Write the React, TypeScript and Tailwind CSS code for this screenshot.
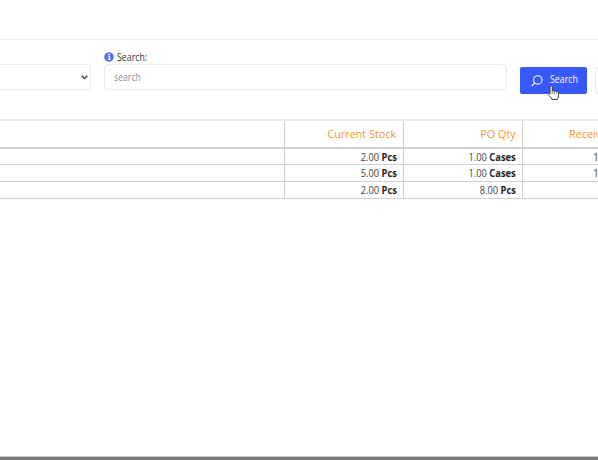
import React from "react";

type Row = { stock: [string, string]; po: [string, string]; received: string };

const rows: Row[] = [
  { stock: ["2.00", "Pcs"], po: ["1.00", "Cases"], received: "1.00" },
  { stock: ["5.00", "Pcs"], po: ["1.00", "Cases"], received: "1.00" },
  { stock: ["2.00", "Pcs"], po: ["8.00", "Pcs"], received: "" },
];

const rowHeights = ["h-[16px]", "h-[17px]", "h-[17px]"];

function Quantity({ value }: { value: [string, string] }) {
  return (
    <div className="border-r border-[#cfcfcf] pr-[6.5px] text-right">
      <span className="inline-block origin-right scale-x-[.93]">
        {value[0]} <b className="font-bold text-[#222]">{value[1]}</b>
      </span>
    </div>
  );
}

function Heading({ children }: { children: string }) {
  return (
    <div className="border-r border-[#cfcfcf] pr-[6.5px] text-right">
      <span className="inline-block origin-right scale-x-[.94]">{children}</span>
    </div>
  );
}

function Pointer() {
  return (
    <svg className="absolute left-[27px] top-[18px] h-[16px] w-[13px]" viewBox="0 0 14 17">
      <path
        d="M3.2 9.8V2c0-1.8 2.4-1.8 2.4 0v4.4c.2-.9 2.1-.8 2.3.4.3-.9 2.1-.7 2.3.4.5-.7 2.2-.4 2.2 1v3.1c0 1.8-.9 2.6-1.3 4.1H5.2C4.5 13.2 2.4 11.8 1 9.9.2 8.7 1.7 7.7 3.2 9.8Z"
        fill="white"
        stroke="#333"
        strokeWidth="1"
        strokeLinejoin="round"
      />
      <path d="M5.6 6.5v3M7.9 7v2.5M10.2 7.5v2" stroke="#444" strokeWidth=".8" fill="none" />
    </svg>
  );
}

export default function App() {
  return (
    <div className="flex h-[460px] w-[598px] flex-col overflow-hidden bg-white font-['Open_Sans','Noto_Sans',sans-serif] text-[10px] text-[#444]">
      <header className="h-10 shrink-0 border-b border-[#eeeeee]" />
      <div className="flex h-[80px] shrink-0 items-start">
        <div className="mt-[24px] flex h-[26px] w-[91px] shrink-0 items-center justify-end rounded-r-[4px] border border-l-0 border-[#e9eaf2] pr-[2px]">
          <svg className="h-[5px] w-[7px]" viewBox="0 0 7 5" fill="none">
            <path d="M.8.8 3.5 3.5 6.2.8" stroke="#383b40" strokeWidth="1.5" />
          </svg>
        </div>
        <div className="ml-[13px] w-[403px] shrink-0 pt-[10px]">
          <div className="flex h-[14px] items-center gap-[3px] text-[#333]">
            <svg className="h-[10px] w-[10px]" viewBox="0 0 10 10">
              <circle cx="5" cy="5" r="4.8" fill="#5872ff" />
              <path d="M4 4.2h1.5v3M3.9 7.4h2.5" stroke="white" strokeWidth="1.1" fill="none" />
              <circle cx="5" cy="2.4" r=".8" fill="white" />
            </svg>
            <span className="origin-left scale-x-[.88]">Search:</span>
          </div>
          <div className="flex h-[26px] items-center rounded-[4px] border border-[#e9eaf2] pl-[8.5px] text-[#8b8d9e]">
            <span className="origin-left scale-x-[.87]">search</span>
          </div>
        </div>
        <div className="relative ml-[13px] mt-[27px] flex h-[27px] w-[67px] shrink-0 items-center rounded-[2px] bg-[#3858fb] pl-[11px] text-white">
          <svg className="mr-[6.5px] h-[12px] w-[12px]" viewBox="0 0 12 12" fill="none">
            <circle cx="6.8" cy="4.9" r="4.2" stroke="white" strokeWidth="1.1" />
            <path d="M3.8 7.9.7 11" stroke="white" strokeWidth="1.2" />
          </svg>
          <span className="relative -top-px origin-left scale-x-[.88]">Search</span>
          <Pointer />
        </div>
        <div className="ml-[8px] mt-[27px] h-[27px] w-[20px] shrink-0 rounded-[3px] border border-[#e5e6ee]" />
      </div>
      <div className="-mt-px w-[642px] shrink-0 border-t-2 border-[#e9e9e9]">
        <div className="grid h-[28px] grid-cols-[285px_119px_119px_119px] border-b-2 border-[#d2d2d2] text-[11.5px] font-medium leading-[26px] text-[#f9961f]">
          <div className="border-r border-[#cfcfcf]" />
          <Heading>Current Stock</Heading>
          <Heading>PO Qty</Heading>
          <div className="pl-[45.5px]">
            <span className="inline-block origin-left scale-x-[.94]">Received</span>
          </div>
        </div>
        {rows.map((row, index) => (
          <div
            key={index}
            className={`grid grid-cols-[285px_119px_119px_119px] border-b border-[#d0d0d0] leading-[16px] ${rowHeights[index]}`}
          >
            <div className="border-r border-[#cfcfcf]" />
            <Quantity value={row.stock} />
            <Quantity value={row.po} />
            <div className="pl-[70px]">{row.received}</div>
          </div>
        ))}
      </div>
      <footer className="mt-auto h-1 shrink-0 border-t border-[#c9c7cd] bg-[#7b7b7b]" />
    </div>
  );
}
